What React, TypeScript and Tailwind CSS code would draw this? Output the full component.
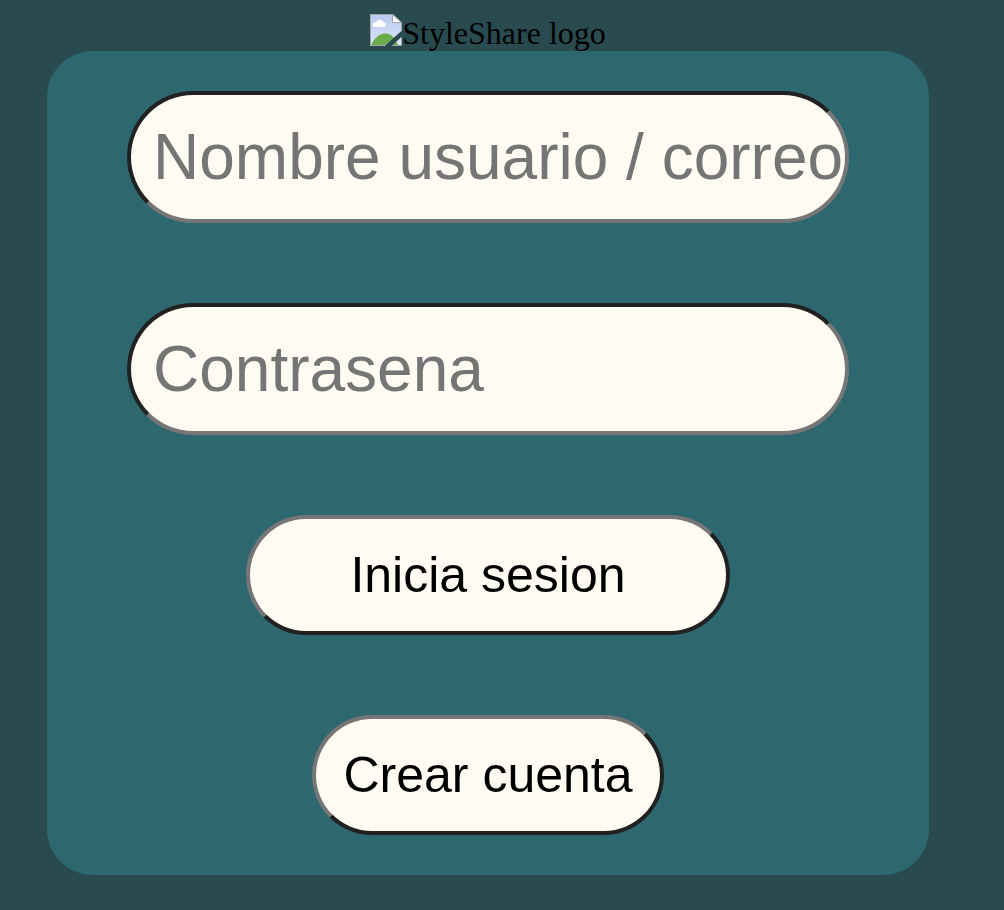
import React from "react";

const fieldClass =
  "h-33 w-full rounded-full border-4 border-t-[#212121] border-l-[#212121] border-r-[#767676] border-b-[#767676] bg-[#fefbf3] pl-[22px] text-[64px] text-black outline-none placeholder:text-[#757575]";
const buttonClass =
  "h-30 rounded-full border-4 border-t-[#767676] border-l-[#767676] border-r-[#212121] border-b-[#212121] bg-[#fefbf3] text-[50px] text-black";

function BrokenImage() {
  return (
    <svg width="32" height="32" viewBox="0 0 32 32" aria-hidden="true">
      <defs>
        <linearGradient id="sky" x1="0" y1="0" x2="0" y2="32" gradientUnits="userSpaceOnUse">
          <stop offset="0" stopColor="#b9caf0" />
          <stop offset="1" stopColor="#dbe5fa" />
        </linearGradient>
      </defs>
      <path d="M0 0H23L32 9V17L15 32H0Z" fill="url(#sky)" />
      <path d="M1 31C5 23 10 19.500 15 19.500C19 19.500 22 21 24 24L15 31Z" fill="#6cab49" />
      <path d="M5 13a2.300 2.300 0 0 1 0-4.600h1a4 4 0 0 1 7.500 0a2.300 2.300 0 0 1 0 4.600Z" fill="#fff" />
      <path d="M22 31L31 23V31Z" fill="#dbe5fa" />
      <path d="M22 31L26 27.500L28 31Z" fill="#6cab49" />
      <path d="M14 31.500H0.500V0.500H22.500L31.500 9V16M31.500 23V31.500H21" fill="none" stroke="#a2a3a8" />
      <path d="M22.500 0.500V8.500H31.500Z" fill="#fff" stroke="#a2a3a8" />
      <path d="M14.500 32L32 16.500V22.500L21.500 32Z" fill="#294b4f" />
    </svg>
  );
}

export default function App() {
  return (
    <main className="min-h-screen bg-[#294b4f] pt-[14px] pr-[75px] pb-[35px] pl-[47px] font-['Liberation_Sans',Arial,sans-serif]">
      <div className="flex h-[37px] items-start justify-center font-['Liberation_Serif','Times_New_Roman',serif] text-[32px] leading-[38px] text-black">
        <BrokenImage />
        <span>StyleShare logo</span>
      </div>
      <form
        className="flex flex-col items-center gap-20 rounded-[46px] bg-[#2d6871] px-20 py-10"
        onSubmit={(e) => e.preventDefault()}
      >
        <input className={fieldClass} type="text" aria-label="Nombre usuario / correo" placeholder="Nombre usuario / correo" />
        <input className={fieldClass} type="password" aria-label="Contrasena" placeholder="Contrasena" />
        <button className={`${buttonClass} px-25`} type="submit">Inicia sesion</button>
        <button className={`${buttonClass} px-[27px]`} type="button">Crear cuenta</button>
      </form>
    </main>
  );
}
